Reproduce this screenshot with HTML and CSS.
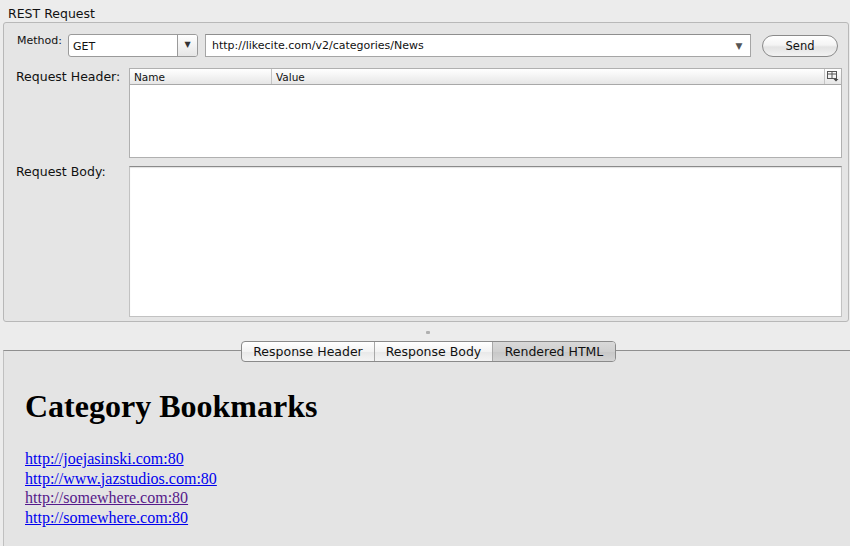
FILE: index.html
```html
<!DOCTYPE html>
<html>
<head>
<meta charset="utf-8">
<link rel="stylesheet" href="styles.css">
</head>
<body>
<div class="window">
  <div class="title">REST Request</div>
  <div class="group">
    <div class="method-row">
      <span class="method-label">Method:</span>
      <div class="select">
        <span class="select-text">GET</span>
        <span class="select-btn">▼</span>
      </div>
      <div class="url">
        <span class="url-text">http://likecite.com/v2/categories/News</span>
        <span class="url-arrow">▼</span>
      </div>
      <button class="send">Send</button>
    </div>
    <div class="field-row">
      <span class="field-label">Request Header:</span>
      <div class="table">
        <div class="thead">
          <span class="th th-name">Name</span>
          <span class="th th-value">Value</span>
          <span class="th th-icon">
            <svg width="12" height="11" viewBox="0 0 12 11">
              <rect x="0.5" y="0.5" width="9" height="7" fill="none" stroke="#555"/>
              <line x1="0.5" y1="3" x2="9.5" y2="3" stroke="#555"/>
              <line x1="5" y1="0.5" x2="5" y2="7.5" stroke="#555"/>
              <path d="M6.5 8 L11.5 8 L9 10.5 Z" fill="#444"/>
            </svg>
          </span>
        </div>
        <div class="tbody"></div>
      </div>
    </div>
    <div class="field-row body-row">
      <span class="field-label">Request Body:</span>
      <div class="textarea"></div>
    </div>
  </div>
  <div class="splitter"><span class="dimple"></span></div>
  <div class="response">
    <div class="tabs">
      <span class="tab">Response Header</span>
      <span class="tab">Response Body</span>
      <span class="tab active">Rendered HTML</span>
    </div>
    <div class="rendered">
      <h1 class="rh1">Category Bookmarks</h1>
      <a class="link" href="#a">http://joejasinski.com:80</a><br>
      <a class="link" href="#b">http://www.jazstudios.com:80</a><br>
      <a class="link visited" href="#c">http://somewhere.com:80</a><br>
      <a class="link" href="#d">http://somewhere.com:80</a>
    </div>
  </div>
</div>
</body>
</html>
```
FILE: styles.css
```css
html, body {
  margin: 0;
  padding: 0;
}
body {
  width: 850px;
  height: 546px;
  overflow: hidden;
  background: #ececec;
  font-family: "DejaVu Sans", "Liberation Sans", sans-serif;
  color: #111;
}
.window {
  display: flex;
  flex-direction: column;
  height: 546px;
}
.title {
  height: 22px;
  line-height: 27px;
  padding-left: 8px;
  font-size: 12.5px;
  box-sizing: border-box;
}
.group {
  margin-left: 3px;
  width: 846px;
  height: 300px;
  box-sizing: border-box;
  border: 1px solid #b8b8b8;
  border-radius: 3px;
  background: #e5e5e5;
  padding: 11px 5px 0 12px;
  display: flex;
  flex-direction: column;
}
.method-row {
  display: flex;
  align-items: flex-start;
  height: 23px;
  margin-bottom: 11px;
}
.method-label {
  font-size: 11px;
  width: 51px;
  margin-left: 1px;
  line-height: 13px;
}
.select {
  width: 130px;
  height: 23px;
  display: flex;
  box-sizing: border-box;
  border: 1px solid #9a9a9a;
  border-radius: 3px;
  background: #fff;
  overflow: hidden;
}
.select-text {
  flex: 1;
  font-size: 11px;
  padding-left: 4px;
  line-height: 23px;
}
.select-btn {
  width: 19px;
  border-left: 1px solid #9a9a9a;
  background: linear-gradient(#ffffff, #e6e6e6);
  font-size: 8px;
  color: #333;
  text-align: center;
  line-height: 20px;
}
.url {
  margin-left: 7px;
  width: 546px;
  height: 23px;
  box-sizing: border-box;
  border: 1px solid #a5a5a5;
  border-top-color: #8e8e8e;
  background: #fff;
  display: flex;
  align-items: center;
}
.url-text {
  flex: 1;
  font-size: 11px;
  padding-left: 6px;
}
.url-arrow {
  font-size: 9px;
  color: #555;
  width: 22px;
  text-align: center;
}
.send {
  margin-left: 11px;
  margin-top: 1px;
  width: 76px;
  height: 22px;
  border: 1px solid #8a8a8a;
  border-radius: 11px;
  background: linear-gradient(#ffffff, #f4f4f4 45%, #e3e3e3 55%, #f2f2f2);
  font-family: "DejaVu Sans", sans-serif;
  font-size: 11.5px;
  color: #111;
  padding: 0;
}
.field-row {
  display: flex;
  height: 90px;
  margin-bottom: 8px;
}
.body-row {
  height: 151px;
  margin-bottom: 0;
}
.field-label {
  width: 113px;
  font-size: 12.5px;
  line-height: 16px;
  padding-top: 1px;
}
.body-row .field-label {
  line-height: 10px;
}
.table {
  width: 713px;
  box-sizing: border-box;
  border: 1px solid #b0b0b0;
  background: #fff;
  display: flex;
  flex-direction: column;
}
.thead {
  height: 16px;
  display: flex;
  box-sizing: border-box;
  border-bottom: 1px solid #a8a8a8;
  background: linear-gradient(#ffffff, #f3f3f3 50%, #e6e6e6);
}
.th {
  font-size: 10.5px;
  line-height: 16px;
  padding-left: 4px;
  box-sizing: border-box;
  border-right: 1px solid #c4c4c4;
}
.th-name { width: 142px; }
.th-value { flex: 1; }
.th-icon {
  width: 16px;
  border-right: none;
  padding-left: 2px;
  padding-top: 2px;
  display: flex;
}
.textarea {
  width: 713px;
  box-sizing: border-box;
  border: 1px solid #c2c2c2;
  border-top: 1px solid #8a8a8a;
  background: #fff;
  box-shadow: inset 0 1px 1px rgba(0,0,0,0.12);
}
.splitter {
  height: 28px;
  display: flex;
  justify-content: flex-start;
}
.dimple {
  margin-left: 426px;
  margin-top: 9px;
  width: 4px;
  height: 3px;
  background: #b0b0b0;
  border-radius: 1px;
}
.response {
  flex: 1;
  margin-left: 3px;
  border-top: 1px solid #8f8f8f;
  border-left: 1px solid #c0c0c0;
  background: #e4e4e4;
  position: relative;
}
.tabs {
  position: absolute;
  left: 237px;
  top: -10px;
  display: flex;
  height: 21px;
  box-sizing: border-box;
  border: 1px solid #8a8a8a;
  border-radius: 4px;
  overflow: hidden;
  background: linear-gradient(#ffffff, #f3f3f3 50%, #e9e9e9 55%, #f4f4f4);
}
.tab {
  font-size: 12.5px;
  line-height: 20px;
  padding: 0 4px;
  border-left: 1px solid #a8a8a8;
  white-space: nowrap;
}
.tab:first-child {
  border-left: none;
}
.tab:nth-child(1) { width: 132px; box-sizing: border-box; text-align: center; }
.tab:nth-child(2) { width: 118px; box-sizing: border-box; text-align: center; }
.tab:nth-child(3) { width: 123px; box-sizing: border-box; text-align: center; }
.tab.active {
  background: linear-gradient(#d9d9d9, #cfcfcf 50%, #c8c8c8 55%, #d4d4d4);
}
.rendered {
  padding: 37px 0 0 21px;
  font-family: "Liberation Serif", "Times New Roman", serif;
  font-size: 16px;
  line-height: 19.6px;
}
.rh1 {
  margin: 0 0 25px 0;
  font-size: 32px;
  line-height: 36px;
  font-weight: bold;
  color: #000;
}
.link {
  color: #0000ee;
  text-decoration: underline;
}
.link.visited {
  color: #551a8b;
}
```
